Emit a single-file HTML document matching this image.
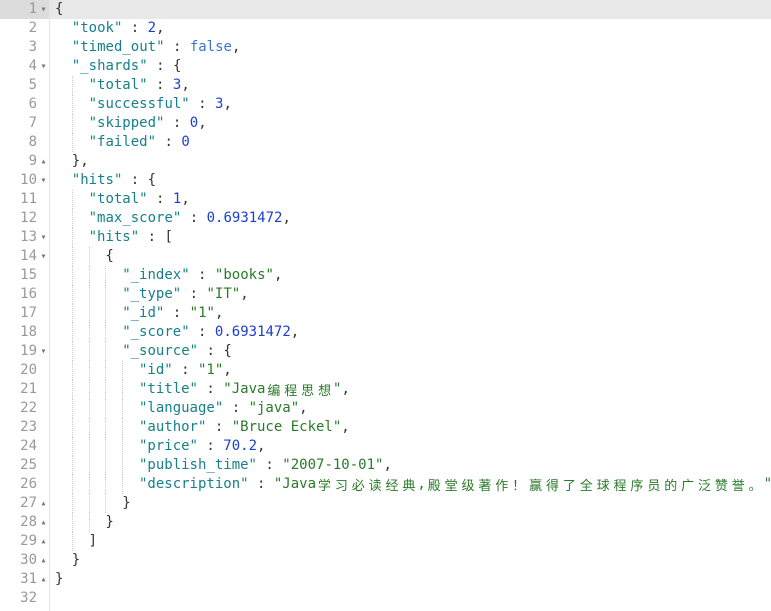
<!DOCTYPE html>
<html><head><meta charset="utf-8"><style>
html,body{margin:0;padding:0;width:771px;height:611px;background:#fff;overflow:hidden}
body{font-family:"DejaVu Sans Mono","Liberation Mono",monospace;font-size:14px;color:#333}
.gut{position:absolute;left:0;top:0;width:49px;height:611px;border-right:1px solid #e3e3e3;background:#fff}
.act{position:absolute;left:0;top:0;width:771px;height:19px;background:#e8e8e8}
.actg{position:absolute;left:0;top:0;width:49px;height:19px;background:#dcdcdc}
.n{position:absolute;left:0;width:37px;text-align:right;height:19px;line-height:19px;color:#999;font-size:14px}
.f{position:absolute;left:39px;width:9px;height:19px;line-height:19px;font-size:10px;color:#777;text-align:center}
.l{position:absolute;left:55px;height:19px;line-height:19px;white-space:pre}
i{display:inline-block;width:16.8px;height:19px;vertical-align:top;box-sizing:border-box}
i.g{border-left:1px dotted #c8c8c8}
.k{color:#17808c}.s{color:#2a7a2a}.d{color:#1b3fd0}.b{color:#3a74d4}
b{font-weight:normal;display:inline-block;width:16.9px;height:19px;line-height:19px;overflow:hidden;text-align:center;font-family:"Noto Sans CJK SC",sans-serif;font-size:13px;vertical-align:top}
</style></head><body>
<div class="act"></div>
<div class="gut"></div>
<div class="actg"></div>

<div class="n" style="top:0">1</div><div class="f" style="top:0">▾</div>
<div class="n" style="top:19px">2</div>
<div class="n" style="top:38px">3</div>
<div class="n" style="top:57px">4</div><div class="f" style="top:57px">▾</div>
<div class="n" style="top:76px">5</div>
<div class="n" style="top:95px">6</div>
<div class="n" style="top:114px">7</div>
<div class="n" style="top:133px">8</div>
<div class="n" style="top:152px">9</div><div class="f" style="top:152px">▴</div>
<div class="n" style="top:171px">10</div><div class="f" style="top:171px">▾</div>
<div class="n" style="top:190px">11</div>
<div class="n" style="top:209px">12</div>
<div class="n" style="top:228px">13</div><div class="f" style="top:228px">▾</div>
<div class="n" style="top:247px">14</div><div class="f" style="top:247px">▾</div>
<div class="n" style="top:266px">15</div>
<div class="n" style="top:285px">16</div>
<div class="n" style="top:304px">17</div>
<div class="n" style="top:323px">18</div>
<div class="n" style="top:342px">19</div><div class="f" style="top:342px">▾</div>
<div class="n" style="top:361px">20</div>
<div class="n" style="top:380px">21</div>
<div class="n" style="top:399px">22</div>
<div class="n" style="top:418px">23</div>
<div class="n" style="top:437px">24</div>
<div class="n" style="top:456px">25</div>
<div class="n" style="top:475px">26</div>
<div class="n" style="top:494px">27</div><div class="f" style="top:494px">▴</div>
<div class="n" style="top:513px">28</div><div class="f" style="top:513px">▴</div>
<div class="n" style="top:532px">29</div><div class="f" style="top:532px">▴</div>
<div class="n" style="top:551px">30</div><div class="f" style="top:551px">▴</div>
<div class="n" style="top:570px">31</div><div class="f" style="top:570px">▴</div>
<div class="n" style="top:589px">32</div>

<div class="l" style="top:0">{</div>
<div class="l" style="top:19px"><i></i><span class="k">"took"</span> : <span class="d">2</span>,</div>
<div class="l" style="top:38px"><i></i><span class="k">"timed_out"</span> : <span class="b">false</span>,</div>
<div class="l" style="top:57px"><i></i><span class="k">"_shards"</span> : {</div>
<div class="l" style="top:76px"><i></i><i class="g"></i><span class="k">"total"</span> : <span class="d">3</span>,</div>
<div class="l" style="top:95px"><i></i><i class="g"></i><span class="k">"successful"</span> : <span class="d">3</span>,</div>
<div class="l" style="top:114px"><i></i><i class="g"></i><span class="k">"skipped"</span> : <span class="d">0</span>,</div>
<div class="l" style="top:133px"><i></i><i class="g"></i><span class="k">"failed"</span> : <span class="d">0</span></div>
<div class="l" style="top:152px"><i></i>},</div>
<div class="l" style="top:171px"><i></i><span class="k">"hits"</span> : {</div>
<div class="l" style="top:190px"><i></i><i class="g"></i><span class="k">"total"</span> : <span class="d">1</span>,</div>
<div class="l" style="top:209px"><i></i><i class="g"></i><span class="k">"max_score"</span> : <span class="d">0.6931472</span>,</div>
<div class="l" style="top:228px"><i></i><i class="g"></i><span class="k">"hits"</span> : [</div>
<div class="l" style="top:247px"><i></i><i class="g"></i><i class="g"></i>{</div>
<div class="l" style="top:266px"><i></i><i class="g"></i><i class="g"></i><i class="g"></i><span class="k">"_index"</span> : <span class="s">"books"</span>,</div>
<div class="l" style="top:285px"><i></i><i class="g"></i><i class="g"></i><i class="g"></i><span class="k">"_type"</span> : <span class="s">"IT"</span>,</div>
<div class="l" style="top:304px"><i></i><i class="g"></i><i class="g"></i><i class="g"></i><span class="k">"_id"</span> : <span class="s">"1"</span>,</div>
<div class="l" style="top:323px"><i></i><i class="g"></i><i class="g"></i><i class="g"></i><span class="k">"_score"</span> : <span class="d">0.6931472</span>,</div>
<div class="l" style="top:342px"><i></i><i class="g"></i><i class="g"></i><i class="g"></i><span class="k">"_source"</span> : {</div>
<div class="l" style="top:361px"><i></i><i class="g"></i><i class="g"></i><i class="g"></i><i class="g"></i><span class="k">"id"</span> : <span class="s">"1"</span>,</div>
<div class="l" style="top:380px"><i></i><i class="g"></i><i class="g"></i><i class="g"></i><i class="g"></i><span class="k">"title"</span> : <span class="s">"Java<b>编</b><b>程</b><b>思</b><b>想</b>"</span>,</div>
<div class="l" style="top:399px"><i></i><i class="g"></i><i class="g"></i><i class="g"></i><i class="g"></i><span class="k">"language"</span> : <span class="s">"java"</span>,</div>
<div class="l" style="top:418px"><i></i><i class="g"></i><i class="g"></i><i class="g"></i><i class="g"></i><span class="k">"author"</span> : <span class="s">"Bruce Eckel"</span>,</div>
<div class="l" style="top:437px"><i></i><i class="g"></i><i class="g"></i><i class="g"></i><i class="g"></i><span class="k">"price"</span> : <span class="d">70.2</span>,</div>
<div class="l" style="top:456px"><i></i><i class="g"></i><i class="g"></i><i class="g"></i><i class="g"></i><span class="k">"publish_time"</span> : <span class="s">"2007-10-01"</span>,</div>
<div class="l" style="top:475px"><i></i><i class="g"></i><i class="g"></i><i class="g"></i><i class="g"></i><span class="k">"description"</span> : <span class="s">"Java<b>学</b><b>习</b><b>必</b><b>读</b><b>经</b><b>典</b>,<b>殿</b><b>堂</b><b>级</b><b>著</b><b>作</b><b>！</b><b>赢</b><b>得</b><b>了</b><b>全</b><b>球</b><b>程</b><b>序</b><b>员</b><b>的</b><b>广</b><b>泛</b><b>赞</b><b>誉</b><b>。</b>"</span></div>
<div class="l" style="top:494px"><i></i><i class="g"></i><i class="g"></i><i class="g"></i>}</div>
<div class="l" style="top:513px"><i></i><i class="g"></i><i class="g"></i>}</div>
<div class="l" style="top:532px"><i></i><i class="g"></i>]</div>
<div class="l" style="top:551px"><i></i>}</div>
<div class="l" style="top:570px">}</div>
</body></html>
